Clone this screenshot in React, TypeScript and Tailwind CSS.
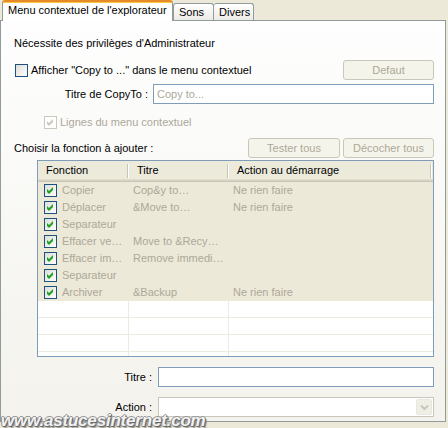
import React from 'react';

const font = { fontFamily: '"Liberation Sans", Arial, sans-serif' };

const CheckBox: React.FC<{ checked?: boolean; disabled?: boolean }> = ({ checked, disabled }) => (
  <span
    className={`w-[13px] h-[13px] shrink-0 border flex items-center justify-center ${
      disabled
        ? 'border-[#CAC8BB] bg-white'
        : 'border-[#1C5180] bg-gradient-to-br from-[#DCDCD7] to-white'
    }`}
  >
    {checked && (
      <svg width="11" height="11" viewBox="0 0 11 11">
        <polygon points="2,4 4,6 8,2 8,5 4,9 2,7" fill={disabled ? '#CAC8BB' : '#21A121'} />
      </svg>
    )}
  </span>
);

const XpButton: React.FC<{ label: string; w: string }> = ({ label, w }) => (
  <div
    className={`${w} h-[20px] rounded-[3px] border border-[#C9C7BA] bg-[#F5F4EA] text-[#ACA899] flex items-center justify-center`}
  >
    {label}
  </div>
);

const rows = [
  { f: 'Copier', t: 'Cop&y to…', a: 'Ne rien faire' },
  { f: 'Déplacer', t: '&Move to…', a: 'Ne rien faire' },
  { f: 'Separateur', t: '', a: '' },
  { f: 'Effacer ve…', t: 'Move to &Recy…', a: '' },
  { f: 'Effacer im…', t: 'Remove immedi…', a: '' },
  { f: 'Separateur', t: '', a: '' },
  { f: 'Archiver', t: '&Backup', a: 'Ne rien faire' },
];

const HeaderSep = () => (
  <span className="w-[2px] h-[14px] shrink-0 border-l border-[#C7C5B2] bg-white" />
);

export default function App() {
  return (
    <div className="w-[448px] h-[428px] bg-[#ECE9D8] relative overflow-hidden text-[11px] text-black" style={font}>
      {/* tabs */}
      <div className="h-[20px] flex items-end pl-[2px]">
        <div className="relative z-10 w-[171px] h-[21px] -mb-px bg-white border-x border-[#919B9C] border-t-2 border-t-[#E68B2C] rounded-t-[3px] shadow-[inset_0_1px_0_#FFC83C] flex items-center pl-[5px] pb-[2px]">
          Menu contextuel de l'explorateur
        </div>
        <div className="w-[41px] h-[17px] border border-b-0 border-[#919B9C] rounded-t-[3px] bg-gradient-to-b from-white to-[#ECEBE6] flex items-center pl-[5px]">
          Sons
        </div>
        <div className="w-[40px] h-[17px] border border-b-0 border-l-0 border-[#919B9C] rounded-t-[3px] bg-gradient-to-b from-white to-[#ECEBE6] flex items-center pl-[5px]">
          Divers
        </div>
      </div>

      {/* tab page */}
      <div className="w-[446px] h-[402px] border border-[#919B9C] bg-gradient-to-b from-[#FEFEFE] to-[#F3F2EC] flex flex-col pr-[11px]">
        <div className="mt-[16px] ml-[13px] h-[13px] leading-[13px]">Nécessite des privilèges d'Administrateur</div>

        <div className="mt-[10px] h-[20px] flex items-center">
          <span className="ml-[14px]">
            <CheckBox />
          </span>
          <span className="ml-[3px]">Afficher "Copy to ..." dans le menu contextuel</span>
          <span className="ml-auto">
            <XpButton label="Defaut" w="w-[91px]" />
          </span>
        </div>

        <div className="mt-[4px] h-[20px] flex items-center">
          <span className="w-[147px] text-right">Titre de CopyTo :</span>
          <div className="ml-[5px] flex-1 h-[20px] border border-[#7F9DB9] bg-white flex items-center pl-[3px] text-[#ACA899]">
            Copy to...
          </div>
        </div>

        <div className="mt-[11px] h-[14px] flex items-center text-[#ACA899]">
          <span className="ml-[43px]">
            <CheckBox checked disabled />
          </span>
          <span className="ml-[3px]">Lignes du menu contextuel</span>
        </div>

        <div className="mt-[9px] h-[20px] flex items-center">
          <span className="ml-[13px]">Choisir la fonction à ajouter :</span>
          <span className="ml-auto flex gap-[3px]">
            <XpButton label="Tester tous" w="w-[92px]" />
            <XpButton label="Décocher tous" w="w-[91px]" />
          </span>
        </div>

        {/* list view */}
        <div className="mt-[2px] ml-[36px] h-[197px] border border-[#7F9DB9] bg-white flex flex-col overflow-hidden">
          <div className="h-[21px] shrink-0 bg-[#EBEADB] shadow-[inset_0_-1px_0_#CBC7B8,inset_0_-2px_0_#D6D2C2,inset_0_-3px_0_#E2DECD] flex items-center pb-[2px]">
            <span className="w-[89px] pl-[8px]">Fonction</span>
            <HeaderSep />
            <span className="w-[98px] pl-[8px]">Titre</span>
            <HeaderSep />
            <span className="flex-1 pl-[8px]">Action au démarrage</span>
            <HeaderSep />
            <span className="w-[1px]" />
          </div>
          {rows.map((r, i) => (
            <div key={i} className="h-[17px] shrink-0 bg-[#ECE9D8] flex items-center text-[#ACA899]">
              <span className="w-[91px] pl-[6px] flex items-center gap-[5px] whitespace-nowrap">
                <CheckBox checked />
                {r.f}
              </span>
              <span className="w-[100px] pl-[4px] whitespace-nowrap">{r.t}</span>
              <span className="flex-1 pl-[4px] whitespace-nowrap">{r.a}</span>
            </div>
          ))}
          {[0, 1, 2, 3].map((i) => (
            <div key={'e' + i} className="h-[17px] shrink-0 flex border-b border-[#EDEBE0]">
              <span className="w-[91px] border-r border-[#EDEBE0]" />
              <span className="w-[100px] border-r border-[#EDEBE0]" />
              <span className="flex-1" />
            </div>
          ))}
        </div>

        <div className="mt-[10px] h-[20px] flex items-center">
          <span className="w-[151px] text-right">Titre :</span>
          <div className="ml-[6px] flex-1 h-[20px] border border-[#7F9DB9] bg-white" />
        </div>

        <div className="mt-[10px] h-[20px] flex items-center">
          <span className="w-[151px] text-right">Action :</span>
          <div className="ml-[6px] flex-1 h-[20px] border border-[#C9C7BA] bg-white flex justify-end p-[1px]">
            <div className="w-[16px] h-full rounded-[2px] border border-[#E8E6DD] bg-[#F0EFE6] flex items-center justify-center">
              <svg width="9" height="7" viewBox="0 0 9 7">
                <path d="M1 1.5 L4.5 5 L8 1.5" stroke="#C9C7BA" strokeWidth="2" fill="none" />
              </svg>
            </div>
          </div>
        </div>
      </div>

      {/* watermark */}
      <div
        className="absolute left-[1px] top-[412px] text-[17px] font-bold italic leading-none text-[#F2F2F2] tracking-[-0.2px]"
        style={{
          fontFamily: '"Liberation Sans", Arial, sans-serif',
          textShadow: '1px 1px 0 #6a6a6a, -1px 0 0 #8a8a8a, 0 -1px 0 #9a9a9a, 1px 0 0 #777, 0 1px 0 #777, 2px 2px 1px #999',
        }}
      >
        www.astucesinternet.com
      </div>
    </div>
  );
}
